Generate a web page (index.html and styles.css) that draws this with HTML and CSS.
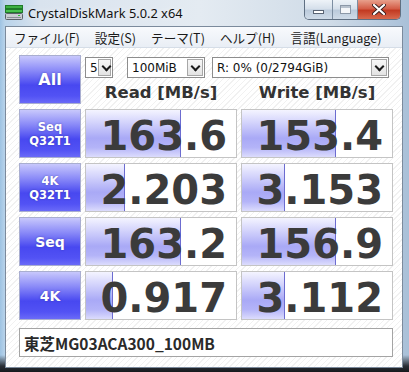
FILE: index.html
```html
<!DOCTYPE html>
<html lang="ja">
<head>
    <meta charset="UTF-8">
    <title>CrystalDiskMark 5.0.2 x64</title>
    <link rel="stylesheet" href="styles.css">
</head>
<body>
    <div class="window">
        <!-- Barra de título -->
        <div class="titlebar">
            <svg class="app-icon" width="19" height="16" viewBox="0 0 19 16">
                <rect x="0.5" y="0.5" width="17" height="3" fill="#3cb043" stroke="#1f7a2a"/>
                <rect x="0.5" y="4.5" width="17" height="3" fill="#47c24e" stroke="#1f7a2a"/>
                <rect x="0.5" y="8.5" width="17" height="6" rx="1" fill="#c9cdd2" stroke="#5b6068"/>
                <rect x="2" y="12" width="14" height="1" fill="#8a9098"/>
                <rect x="13" y="10" width="2" height="1" fill="#2fbf3a"/>
            </svg>
            <span class="title">CrystalDiskMark 5.0.2 x64</span>
            <div class="caption-btns">
                <div class="cap-btn cap-min"><span class="min-glyph"></span></div>
                <div class="cap-btn cap-max"><span class="max-glyph"></span></div>
                <div class="cap-btn cap-close">
                    <svg width="14" height="11" viewBox="0 0 14 11">
                        <path d="M2 1 L12 10 M12 1 L2 10" stroke="#3a2020" stroke-width="4" stroke-linecap="round"/>
                        <path d="M2 1 L12 10 M12 1 L2 10" stroke="#ffffff" stroke-width="2.2" stroke-linecap="round"/>
                    </svg>
                </div>
            </div>
        </div>

        <div class="client">
            <!-- Menu -->
            <div class="menubar">
                <span>ファイル(F)</span>
                <span>設定(S)</span>
                <span>テーマ(T)</span>
                <span>ヘルプ(H)</span>
                <span>言語(Language)</span>
            </div>

            <div class="content">
                <div class="grid">
                    <div class="test-btn big">All</div>
                    <div class="controls">
                        <div class="selects">
                            <div class="select sel-count"><span>5</span><i class="arrow"></i></div>
                            <div class="select sel-size"><span>100MiB</span><i class="arrow"></i></div>
                            <div class="select sel-drive"><span>R: 0% (0/2794GiB)</span><i class="arrow"></i></div>
                        </div>
                        <div class="headers">
                            <div>Read [MB/s]</div>
                            <div>Write [MB/s]</div>
                        </div>
                    </div>

                    <div class="test-btn">Seq<br>Q32T1</div>
                    <div class="result" style="--w: 95px">163.6</div>
                    <div class="result" style="--w: 94px">153.4</div>

                    <div class="test-btn">4K<br>Q32T1</div>
                    <div class="result" style="--w: 39px">2.203</div>
                    <div class="result" style="--w: 43px">3.153</div>

                    <div class="test-btn mid">Seq</div>
                    <div class="result" style="--w: 95px">163.2</div>
                    <div class="result" style="--w: 94px">156.9</div>

                    <div class="test-btn mid">4K</div>
                    <div class="result" style="--w: 27px">0.917</div>
                    <div class="result" style="--w: 43px">3.112</div>
                </div>

                <div class="comment">東芝MG03ACA300_100MB</div>
            </div>
        </div>
    </div>
</body>
</html>
```

FILE: styles.css
```css
* {
    margin: 0;
    padding: 0;
    box-sizing: border-box;
}

body {
    width: 409px;
    height: 372px;
    overflow: hidden;
    font-family: 'DejaVu Sans', sans-serif;
    background: #1c2530;
}

/* Janela (moldura Aero) */
.window {
    height: 372px;
    display: flex;
    flex-direction: column;
    padding: 0 6px 4px 5px;
    background:
        linear-gradient(180deg, rgba(255,255,255,0) 0, rgba(255,255,255,0) 355px, #2a2f36 366px, #15181c 372px),
        linear-gradient(90deg, #9ec3e3 0, #b9d3ea 5px, #d9e3ee 40px, #e4ebf2 200px, #cfdbe7 330px, #a9c0d8 409px);
}

/* Barra de título */
.titlebar {
    height: 26px;
    display: flex;
    align-items: flex-start;
    margin-left: -5px;
    margin-right: -6px;
    padding-left: 5px;
    padding-right: 8px;
}

.app-icon {
    margin-top: 5px;
}

.title {
    margin-top: 5px;
    margin-left: 4px;
    font-family: 'Noto Sans', sans-serif;
    font-size: 12.8px;
    line-height: 16px;
    color: #111;
    text-shadow: 0 0 6px rgba(255,255,255,0.9);
}

.caption-btns {
    margin-left: auto;
    display: flex;
    height: 20px;
    border: 1px solid #5f6f82;
    border-top: none;
    border-radius: 0 0 5px 5px;
    overflow: hidden;
}

.cap-btn {
    height: 19px;
    display: flex;
    justify-content: center;
    align-items: center;
    background: linear-gradient(180deg, #eef3f8 0%, #d6e0eb 45%, #bccbdc 55%, #cfdbe8 100%);
    border-right: 1px solid #7d8ea2;
}

.cap-min {
    width: 28px;
}

.cap-max {
    width: 25px;
}

.cap-close {
    width: 42px;
    border-right: none;
    background: linear-gradient(180deg, #e8a08c 0%, #d45e48 45%, #c23a22 55%, #d8694e 100%);
}

.min-glyph {
    width: 11px;
    height: 4px;
    margin-top: 5px;
    background: #fff;
    border: 1px solid #5a6474;
}

.max-glyph {
    width: 11px;
    height: 9px;
    border: 1px solid #8c98a8;
    background: #f4f6f9;
    box-shadow: inset 0 2px 0 #b8c2ce;
}

/* Área do cliente */
.client {
    flex: 1;
    display: flex;
    flex-direction: column;
    border: 1px solid #7b8a9c;
    background: #fff;
}

.menubar {
    height: 21px;
    display: flex;
    align-items: center;
    gap: 15px;
    padding-left: 8px;
    border-bottom: 1px solid #d5dde7;
    background: linear-gradient(180deg, #f8fafd 0%, #e9eef5 100%);
    font-family: 'Noto Sans CJK JP', sans-serif;
    font-size: 12.6px;
    color: #1a1a1a;
}

.content {
    flex: 1;
    padding: 7px 0 0 13px;
    background: repeating-linear-gradient(135deg, #ffffff 0, #ffffff 3px, #f1f1f1 3px, #f1f1f1 4px);
}

.grid {
    display: grid;
    grid-template-columns: 62px 152px 152px;
    grid-auto-rows: 49px;
    column-gap: 4px;
    row-gap: 5px;
}

/* Botões de teste */
.test-btn {
    display: flex;
    justify-content: center;
    align-items: center;
    text-align: center;
    border: 1px solid #a9aed0;
    background: linear-gradient(180deg, #c8c8fc 0%, #8c8cf8 30%, #4848f0 62%, #5252f4 85%, #6a6af8 100%);
    color: #fff;
    font-weight: bold;
    font-size: 11.5px;
    line-height: 14px;
    text-shadow: 0 0 2px rgba(40,40,140,0.6);
}

.test-btn.big {
    font-size: 16px;
}

.test-btn.mid {
    font-size: 14px;
}

/* Seletores e cabeçalhos */
.controls {
    grid-column: 2 / 4;
    display: flex;
    flex-direction: column;
}

.selects {
    display: flex;
    margin-top: 2px;
    height: 21px;
}

.select {
    display: flex;
    align-items: center;
    justify-content: space-between;
    height: 21px;
    padding: 0 1px 0 4px;
    border: 1px solid #8d8d8d;
    background: #fff;
    font-size: 12px;
    color: #111;
}

.sel-count {
    width: 28px;
}

.sel-size {
    width: 78px;
    margin-left: 14px;
}

.sel-drive {
    width: 177px;
    margin-left: 7px;
}

.arrow {
    width: 16px;
    height: 17px;
    border: 1px solid #a7a7a7;
    background: linear-gradient(180deg, #f7f7f7, #e3e3e3);
    position: relative;
}

.arrow::after {
    content: '';
    position: absolute;
    left: 4px;
    top: 3px;
    width: 5px;
    height: 5px;
    border-right: 2px solid #1a1a1a;
    border-bottom: 2px solid #1a1a1a;
    transform: rotate(45deg);
}

.headers {
    display: grid;
    grid-template-columns: 152px 152px;
    column-gap: 4px;
    margin-top: 5px;
    font-size: 16.5px;
    font-weight: bold;
    line-height: 20px;
    color: #333;
    text-align: center;
}

/* Resultados */
.result {
    display: flex;
    justify-content: flex-end;
    align-items: flex-end;
    padding: 0 9px 1px 0;
    border: 1px solid #c4c4c4;
    background-color: #fff;
    background-image:
        linear-gradient(#6c6cd0, #6c6cd0),
        linear-gradient(180deg, #f4f4ff 0%, #cfcffb 30%, #a9a9f6 60%, #b4b4f8 80%, #dcdcfd 100%);
    background-repeat: no-repeat;
    background-size: 1px 100%, var(--w) 100%;
    background-position: calc(var(--w) - 1px) 0, 0 0;
    font-size: 40px;
    font-weight: bold;
    line-height: 40px;
    color: #3b3b3b;
}

/* Comentário */
.comment {
    width: 374px;
    height: 29px;
    margin-top: 8px;
    padding-left: 4px;
    display: flex;
    align-items: center;
    border: 1px solid #a4a4a4;
    background: #fff;
    font-family: 'Noto Sans CJK JP', sans-serif;
    font-weight: bold;
    font-size: 15.5px;
    color: #2a2a2a;
}
```
